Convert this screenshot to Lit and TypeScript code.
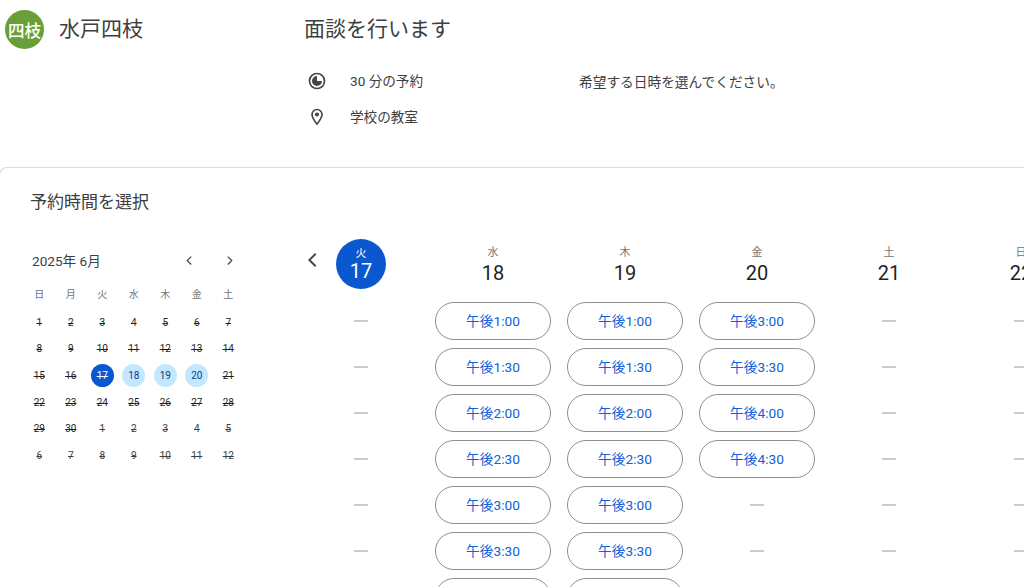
import { LitElement, html, css } from "lit";
import { customElement } from "lit/decorators.js";

const WEEK = ["日", "月", "火", "水", "木", "金", "土"];
const MINI: number[] = [
  1, 2, 3, 4, 5, 6, 7, 8, 9, 10, 11, 12, 13, 14, 15, 16, 17, 18, 19, 20, 21, 22, 23, 24, 25, 26, 27, 28, 29, 30,
  1, 2, 3, 4, 5, 6, 7, 8, 9, 10, 11, 12,
];
const DAYS: { w: string; d: number; slots: (string | null | "")[]; today?: boolean }[] = [
  { w: "火", d: 17, today: true, slots: [null, null, null, null, null, null] },
  { w: "水", d: 18, slots: ["午後1:00", "午後1:30", "午後2:00", "午後2:30", "午後3:00", "午後3:30", ""] },
  { w: "木", d: 19, slots: ["午後1:00", "午後1:30", "午後2:00", "午後2:30", "午後3:00", "午後3:30", ""] },
  { w: "金", d: 20, slots: ["午後3:00", "午後3:30", "午後4:00", "午後4:30", null, null] },
  { w: "土", d: 21, slots: [null, null, null, null, null, null] },
  { w: "日", d: 22, slots: [null, null, null, null, null, null] },
];

@customElement("app-root")
export class AppRoot extends LitElement {
  static styles = css`
    :host {
      display: block;
      width: 1024px;
      height: 587px;
      overflow: hidden;
      background: #fff;
      font-family: Roboto, "Noto Sans CJK JP", sans-serif;
      color: #3c4043;
    }
    .head {
      height: 167px;
      display: grid;
      grid-template-columns: 304px 275px 1fr;
      grid-template-rows: 60px 36px 36px;
      box-sizing: border-box;
    }
    .org {
      display: flex;
      gap: 15px;
      padding: 10px 0 0 5px;
      grid-row: 1 / 4;
      align-items: flex-start;
    }
    .avatar {
      width: 39px;
      height: 39px;
      border-radius: 50%;
      background: #689f38;
      color: #fff;
      font-size: 16.5px;
      font-weight: 500;
      display: flex;
      align-items: center;
      justify-content: center;
      flex: none;
    }
    .orgname {
      font-size: 21px;
      line-height: 38px;
      color: #3c4043;
    }
    .title {
      grid-column: 2 / 4;
      font-size: 21px;
      line-height: 58px;
      color: #3c4043;
    }
    .meta {
      display: flex;
      align-items: center;
      gap: 23px;
      font-size: 13.6px;
      padding: 0 0 0 3px;
      height: 36px;
      margin-top: 3px;
    }
    .meta span {
      padding-bottom: 2px;
    }
    .meta svg {
      width: 20px;
      height: 20px;
      flex: none;
      color: #444746;
    }
    .desc {
      font-size: 13.7px;
      line-height: 36px;
      margin-top: 4px;
    }
    .panel {
      margin-left: -1px;
      border-top: 1px solid #dadce0;
      border-left: 1px solid #dadce0;
      border-top-left-radius: 8px;
      height: 420px;
      box-sizing: border-box;
    }
    .panel h2 {
      margin: 0;
      font-weight: 400;
      font-size: 17px;
      line-height: 24px;
      padding: 22px 0 0 30px;
      color: #3c4043;
    }
    .body {
      display: flex;
      align-items: flex-start;
      margin-top: 25px;
    }
    .mini {
      width: 304px;
      flex: none;
      padding-left: 23.5px;
      box-sizing: border-box;
    }
    .mini-head {
      display: flex;
      align-items: center;
      width: 213px;
      height: 28px;
      margin-top: 7px;
      margin-bottom: 7px;
      padding-left: 8.5px;
      box-sizing: border-box;
      font-size: 13.6px;
      color: #3c4043;
    }
    .mini-title {
      flex: 1;
    }
    .mini-head svg {
      width: 15px;
      height: 15px;
      color: #444746;
      flex: none;
    }
    .mini-head svg + svg {
      margin-left: 25px;
    }
    .mini-grid {
      display: grid;
      grid-template-columns: repeat(7, 31.5px);
      grid-template-rows: 27.7px;
      grid-auto-rows: 26.7px;
      justify-items: center;
      align-items: center;
    }
    .wk {
      font-size: 10px;
      color: #70757a;
      padding-bottom: 2px;
    }
    .md {
      width: 23px;
      height: 23px;
      border-radius: 50%;
      display: flex;
      align-items: center;
      justify-content: center;
      font-size: 10px;
      font-weight: 400;
      color: #1f1f1f;
      text-decoration: line-through;
    }
    .md.out {
      color: #3c4043;
    }
    .md.avail {
      background: #c2e7ff;
      text-decoration: none;
      color: #0a3f7d;
    }
    .md.cur {
      background: #0b57d0;
      color: #fff;
    }
    .main {
      display: flex;
      align-items: flex-start;
    }
    .prev {
      width: 24px;
      height: 24px;
      margin: 9px 0 0 -3px;
      color: #444746;
      flex: none;
    }
    .cols {
      display: flex;
      margin-left: -30px;
    }
    .col {
      width: 132px;
      flex: none;
      display: flex;
      flex-direction: column;
      align-items: center;
    }
    .date {
      height: 50px;
      width: 50px;
      border-radius: 50%;
      box-sizing: border-box;
      padding-top: 4px;
      display: flex;
      flex-direction: column;
      align-items: center;
      justify-content: center;
      margin-bottom: 13px;
      color: #3c4043;
    }
    .date small {
      font-size: 11px;
      line-height: 14px;
      color: #70757a;
    }
    .date b {
      font-weight: 400;
      font-size: 20px;
      line-height: 26px;
      color: #1f1f1f;
    }
    .date.today {
      background: #0b57d0;
      padding-top: 0;
    }
    .date.today small {
      padding-top: 1px;
    }
    .date.today b {
      line-height: 21px;
    }
    .date.today small,
    .date.today b {
      color: #fff;
    }
    .slots {
      display: flex;
      flex-direction: column;
      gap: 8px;
      align-items: center;
    }
    .slot {
      width: 116px;
      height: 38px;
      box-sizing: border-box;
      border: 1px solid #8e918f;
      border-radius: 19px;
      padding-bottom: 2px;
      display: flex;
      align-items: center;
      justify-content: center;
      font-size: 13.7px;
      color: #125fd6;
      background: #fff;
    }
    .none {
      width: 116px;
      height: 38px;
      display: flex;
      align-items: center;
      justify-content: center;
    }
    .none i {
      display: block;
      width: 14px;
      height: 2px;
      background: #c8cbcf;
    }
  `;

  private chevron(dir: "l" | "r") {
    const d = dir === "l" ? "M15.4 6.4 14 5l-7 7 7 7 1.4-1.4L9.8 12z" : "M8.6 6.4 10 5l7 7-7 7-1.4-1.4 5.600-5.600z";
    return html`<svg viewBox="0 0 24 24" fill="currentColor"><path d=${d}></path></svg>`;
  }

  private miniCell(n: number, i: number) {
    const inJune = i < 30;
    const cur = inJune && n === 17;
    const avail = inJune && n >= 18 && n <= 20;
    return html`<div class="md ${cur ? "cur" : ""} ${avail ? "avail" : ""} ${inJune ? "" : "out"}">${n}</div>`;
  }

  render() {
    return html`
      <div class="head">
        <div class="org">
          <div class="avatar">四枝</div>
          <div class="orgname">水戸四枝</div>
        </div>
        <div class="title">面談を行います</div>
        <div class="meta">
          <svg viewBox="0 0 24 24" fill="currentColor">
            <path d="M12 2a10 10 0 1 0 0 20 10 10 0 0 0 0-20zm0 18a8 8 0 1 1 0-16 8 8 0 0 1 0 16z"></path>
            <path d="M12 6a6 6 0 1 0 6 6h-6z"></path>
          </svg>
          <span>30 分の予約</span>
        </div>
        <div class="desc">希望する日時を選んでください。</div>
        <div class="meta">
          <svg viewBox="0 0 24 24" fill="currentColor">
            <path d="M12 2a7 7 0 0 0-7 7c0 5 7 13 7 13s7-8 7-13a7 7 0 0 0-7-7zm0 17c-2-2.600-5-7-5-10a5 5 0 0 1 10 0c0 3-3 7.400-5 10z"></path>
            <circle cx="12" cy="9" r="2.500"></circle>
          </svg>
          <span>学校の教室</span>
        </div>
      </div>
      <div class="panel">
        <h2>予約時間を選択</h2>
        <div class="body">
          <div class="mini">
            <div class="mini-head">
              <span class="mini-title">2025年 6月</span>
              ${this.chevron("l")} ${this.chevron("r")}
            </div>
            <div class="mini-grid">
              ${WEEK.map((w) => html`<div class="wk">${w}</div>`)}
              ${MINI.map((n, i) => this.miniCell(n, i))}
            </div>
          </div>
          <div class="main">
            <div class="prev">${this.chevron("l")}</div>
            <div class="cols">
              ${DAYS.map(
                (d) => html`
                  <div class="col">
                    <div class="date ${d.today ? "today" : ""}">
                      <small>${d.w}</small>
                      <b>${d.d}</b>
                    </div>
                    <div class="slots">
                      ${d.slots.map((s) =>
                        s === null ? html`<div class="none"><i></i></div>` : html`<div class="slot">${s}</div>`
                      )}
                    </div>
                  </div>
                `
              )}
            </div>
          </div>
        </div>
      </div>
    `;
  }
}
